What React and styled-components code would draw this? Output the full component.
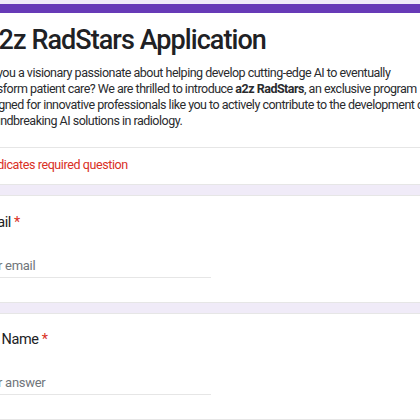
import React from 'react'
import styled, { createGlobalStyle } from 'styled-components'

const GlobalStyle = createGlobalStyle`
    html, body {
        margin: 0;
        padding: 0;
        background: #f0ebf8;
        overflow: hidden;
    }
`

const Page = styled.div`
    width: 420px;
    height: 420px;
    overflow: hidden;
    padding-top: 4px;
    box-sizing: border-box;
`

const Column = styled.div`
    width: 480px;
    margin-left: -40px;
    display: flex;
    flex-direction: column;
    gap: 10px;
`

const Card = styled.div`
    background: #fff;
    border-radius: 8px;
    border: 1px solid #e6e6e6;
    border-top: ${({ $accent }) => ($accent ? '9px solid #673ab7' : '1px solid #e6e6e6')};
    box-sizing: border-box;
    height: ${({ $h }) => $h}px;
    padding: ${({ $pad }) => $pad || '0 16px'};
    font-family: Roboto, "Liberation Sans", sans-serif;
    color: #202124;
`

const Header = styled.div`
    padding: 10px 16px 18px;
    border-bottom: 1px solid #e6e6e6;
`

const Title = styled.h1`
    margin: 0 0 8px 8px;
    font-size: 27px;
    font-weight: 500;
    letter-spacing: -0.95px;
    line-height: 34px;
    white-space: nowrap;
`

const Description = styled.p`
    margin: 0;
    font-size: 12.5px;
    line-height: 16px;
    letter-spacing: -0.5px;
    white-space: nowrap;
    color: #2a2b2e;

    b {
        font-weight: 700;
    }
`

const Required = styled.div`
    padding: 9px 16px 0 19px;
    font-size: 12.5px;
    line-height: 16px;
    letter-spacing: -0.4px;
    color: #d93025;
`

const Question = styled.div`
    padding-top: ${({ $top }) => $top}px;
    font-size: 14.5px;
    line-height: 20px;
    letter-spacing: -0.4px;
`

const Star = styled.span`
    color: #d93025;
`

const Input = styled.div`
    margin-top: 25px;
    width: 234px;
    padding-bottom: 3px;
    border-bottom: 1px solid #e6e6e6;
    font-size: 13px;
    line-height: 16px;
    letter-spacing: -0.3px;
    color: #70757a;
`

const App = () => {
    return (
        <Page>
            <GlobalStyle />
            <Column>
                <Card $accent $pad="0" $h={181}>
                    <Header>
                        <Title>a2z RadStars Application</Title>
                        <Description>
                            Are you a visionary passionate about helping develop cutting-edge AI to eventually<br />
                            transform patient care? We are thrilled to introduce <b>a2z RadStars</b>, an exclusive program<br />
                            designed for innovative professionals like you to actively contribute to the development of<br />
                            groundbreaking AI solutions in radiology.
                        </Description>
                    </Header>
                    <Required>* Indicates required question</Required>
                </Card>
                <Card $h={108}>
                    <Question $top={17}>Email <Star>*</Star></Question>
                    <Input>Your email</Input>
                </Card>
                <Card $h={107}>
                    <Question $top={16}>Full Name <Star>*</Star></Question>
                    <Input>Your answer</Input>
                </Card>
            </Column>
        </Page>
    )
}

export default App
